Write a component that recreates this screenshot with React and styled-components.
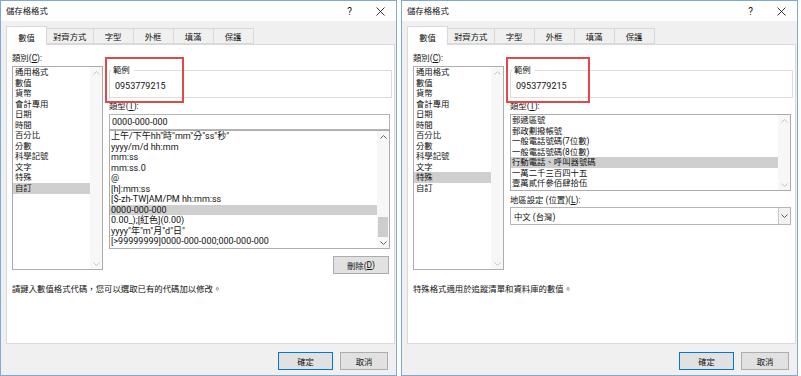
import React from "react";
import styled, { createGlobalStyle } from "styled-components";

const GlobalStyle = createGlobalStyle`
  html, body {
    margin: 0;
    padding: 0;
    background: #fff;
  }
  body {
    font-family: Roboto, "Noto Sans CJK TC", sans-serif;
    font-size: 9px;
    color: #111;
  }
`;

const Page = styled.div`
  display: flex;
  gap: 4px;
  width: 801px;
  height: 376px;
  overflow: hidden;
`;

const Window = styled.div`
  position: relative;
  box-sizing: border-box;
  width: 397px;
  height: 376px;
  border: 1px solid #7fa9d8;
  background: #f0f0f0;
  display: flex;
  flex-direction: column;
`;

const TitleBar = styled.div`
  height: 20px;
  flex-shrink: 0;
  background: #fff;
  display: flex;
  align-items: center;
  padding-left: 5px;
`;

const Title = styled.div`
  flex: 1;
  font-size: 8.4px;
  line-height: 11px;
`;

const TitleButton = styled.div`
  width: 31px;
  height: 20px;
  display: flex;
  align-items: center;
  justify-content: center;
  font-size: 10px;
`;

const TabRow = styled.div`
  height: 23px;
  flex-shrink: 0;
  display: flex;
  align-items: flex-end;
  padding-left: 5px;
`;

const Tab = styled.div`
  position: relative;
  box-sizing: border-box;
  min-width: 41px;
  height: ${(p) => (p.$active ? "19px" : "16px")};
  margin-right: -1px;
  margin-bottom: ${(p) => (p.$active ? "-1px" : "0")};
  padding: ${(p) => (p.$active ? "1px 6px 0" : "0 6px")};
  z-index: ${(p) => (p.$active ? 1 : 0)};
  border: 1px solid #d9d9d9;
  border-bottom: ${(p) => (p.$active ? "none" : "1px solid #d9d9d9")};
  background: ${(p) => (p.$active ? "#fff" : "#f0f0f0")};
  display: flex;
  align-items: center;
  justify-content: center;
  font-size: 8.4px;
  white-space: nowrap;
`;

const Panel = styled.div`
  box-sizing: border-box;
  height: 300px;
  flex-shrink: 0;
  margin: 0 1px 0 5px;
  padding: 8px 2px 0 5px;
  background: #fff;
  border: 1px solid #d9d9d9;
  display: flex;
  flex-direction: column;
`;

const Columns = styled.div`
  height: 221px;
  display: grid;
  grid-template-columns: 91px 283px;
  column-gap: 6px;
  align-items: start;
`;

const Column = styled.div`
  display: flex;
  flex-direction: column;
`;

const Label = styled.div`
  font-size: 8.4px;
  line-height: 11px;
  margin-top: ${(p) => p.$top || 0}px;
  white-space: nowrap;
  u {
    text-decoration-thickness: 0.5px;
    text-underline-offset: 1px;
  }
`;

const SampleGroup = styled.fieldset`
  margin: 12px 0 0;
  padding: 5px 5px 5px;
  border: 1px solid #dcdcdc;
  min-width: 0;
`;

const SampleLegend = styled.legend`
  margin-left: -4px;
  padding: 0 4px 0 2px;
  font-size: 8.4px;
  line-height: 11px;
`;

const SampleValue = styled.div`
  line-height: 11px;
`;

const Annotation = styled.div`
  position: absolute;
  left: 104px;
  top: 56px;
  width: ${(p) => p.$width}px;
  height: 46px;
  box-sizing: border-box;
  border: 2.5px solid #e0484d;
  pointer-events: none;
`;

const TextInput = styled.div`
  box-sizing: border-box;
  width: 281px;
  height: 16px;
  margin-top: 2px;
  padding-left: 2px;
  border: 1px solid #b5b5b5;
  background: #fff;
  line-height: 14px;
`;

const ListBox = styled.div`
  box-sizing: border-box;
  width: ${(p) => p.$width}px;
  height: ${(p) => p.$height}px;
  margin-top: ${(p) => p.$top || 0}px;
  border: 1px solid #acacac;
  background: #fff;
  display: flex;
`;

const ListItems = styled.div`
  flex: 1;
  min-width: 0;
  overflow: hidden;
`;

const ListRow = styled.div`
  height: 10.55px;
  line-height: 10.55px;
  padding-left: ${(p) => p.$indent}px;
  font-size: ${(p) => (p.$zh ? "8.4px" : "9px")};
  background: ${(p) => (p.$selected ? "#cfcfcf" : "transparent")};
  white-space: nowrap;
`;

const ScrollBar = styled.div`
  width: 12px;
  flex-shrink: 0;
  display: flex;
  flex-direction: column;
  background: #f7f7f7;
`;

const ScrollArrow = styled.div`
  height: 11px;
  flex-shrink: 0;
  display: flex;
  align-items: center;
  justify-content: center;
`;

const ScrollRail = styled.div`
  flex: 1;
  display: flex;
  flex-direction: column;
  justify-content: flex-end;
  padding: 0 1px 0 1px;
`;

const ScrollThumb = styled.div`
  height: 20px;
  background: #cdcdcd;
`;

const Button = styled.div`
  box-sizing: border-box;
  width: ${(p) => p.$width}px;
  height: 18px;
  border: 1px solid ${(p) => (p.$default ? "#0078d7" : "#adadad")};
  background: #e1e1e1;
  display: flex;
  align-items: center;
  justify-content: center;
  font-size: 8.4px;
  u {
    text-decoration-thickness: 0.5px;
    text-underline-offset: 1px;
  }
`;

const DeleteRow = styled.div`
  display: flex;
  justify-content: flex-end;
  margin: 7px 3px 0 0;
`;

const Select = styled.div`
  box-sizing: border-box;
  width: 281px;
  height: 18px;
  margin-top: 1px;
  border: 1px solid #b5b5b5;
  background: #fff;
  display: flex;
  align-items: center;
`;

const SelectText = styled.div`
  flex: 1;
  padding-left: 3px;
  font-size: 8.4px;
`;

const SelectButton = styled.div`
  box-sizing: border-box;
  width: 12px;
  height: 16px;
  border-left: 1px solid #c8c8c8;
  background: #f2f2f2;
  display: flex;
  align-items: center;
  justify-content: center;
`;

const Description = styled.div`
  margin-top: 10px;
  font-size: 8.4px;
  line-height: 11px;
`;

const Footer = styled.div`
  display: flex;
  justify-content: flex-end;
  gap: 7px;
  padding: 8px 8px 0 0;
`;

const Chevron = ({ up, color }) => (
  <svg width="7" height="4" viewBox="0 0 7 4">
    <polyline
      points={up ? "0.5,3.5 3.5,0.5 6.5,3.5" : "0.5,0.5 3.5,3.5 6.5,0.5"}
      fill="none"
      stroke={color}
      strokeWidth="1"
    />
  </svg>
);

const CloseIcon = () => (
  <svg width="9" height="9" viewBox="0 0 9 9">
    <path d="M0.5 0.5 L8.5 8.5 M8.5 0.5 L0.5 8.5" stroke="#222" strokeWidth="0.9" />
  </svg>
);

const Scroller = ({ disabled, thumb }) => {
  const color = disabled ? "#c4c4c4" : "#606060";
  return (
    <ScrollBar>
      <ScrollArrow>
        <Chevron up color={color} />
      </ScrollArrow>
      <ScrollRail>{thumb && <ScrollThumb />}</ScrollRail>
      <ScrollArrow>
        <Chevron color={color} />
      </ScrollArrow>
    </ScrollBar>
  );
};

const List = ({ items, selected, width, height, top, indent, zh, disabled, thumb }) => (
  <ListBox $width={width} $height={height} $top={top}>
    <ListItems>
      {items.map((item) => (
        <ListRow key={item} $indent={indent} $zh={zh} $selected={item === selected}>
          {item}
        </ListRow>
      ))}
    </ListItems>
    <Scroller disabled={disabled} thumb={thumb} />
  </ListBox>
);

const tabs = ["數值", "對齊方式", "字型", "外框", "填滿", "保護"];

const categories = [
  "通用格式",
  "數值",
  "貨幣",
  "會計專用",
  "日期",
  "時間",
  "百分比",
  "分數",
  "科學記號",
  "文字",
  "特殊",
  "自訂",
];

const customFormats = [
  '上午/下午hh"時"mm"分"ss"秒"',
  "yyyy/m/d hh:mm",
  "mm:ss",
  "mm:ss.0",
  "@",
  "[h]:mm:ss",
  "[$-zh-TW]AM/PM hh:mm:ss",
  "0000-000-000",
  "0.00_);[紅色](0.00)",
  'yyyy"年"m"月"d"日"',
  "[>99999999]0000-000-000;000-000-000",
];

const specialFormats = [
  "郵遞區號",
  "郵政劃撥帳號",
  "一般電話號碼(7位數)",
  "一般電話號碼(8位數)",
  "行動電話、呼叫器號碼",
  "一萬二千三百四十五",
  "壹萬貳仟參佰肆拾伍",
];

const FormatDialog = ({ category, markWidth, description, children }) => (
  <Window>
    <TitleBar>
      <Title>儲存格格式</Title>
      <TitleButton>?</TitleButton>
      <TitleButton>
        <CloseIcon />
      </TitleButton>
    </TitleBar>
    <TabRow>
      {tabs.map((t, i) => (
        <Tab key={t} $active={i === 0}>
          {t}
        </Tab>
      ))}
    </TabRow>
    <Panel>
      <Columns>
        <Column>
          <Label>
            類別(<u>C</u>):
          </Label>
          <List
            items={categories}
            selected={category}
            width={91}
            height={204}
            top={2}
            indent={2}
            zh
            disabled
          />
        </Column>
        <Column>
          <SampleGroup>
            <SampleLegend>範例</SampleLegend>
            <SampleValue>0953779215</SampleValue>
          </SampleGroup>
          <Label $top={3}>
            類型(<u>T</u>):
          </Label>
          {children}
        </Column>
      </Columns>
      <Description>{description}</Description>
    </Panel>
    <Footer>
      <Button $width={55} $default>
        確定
      </Button>
      <Button $width={48}>取消</Button>
    </Footer>
    <Annotation $width={markWidth} />
  </Window>
);

export default function App() {
  return (
    <>
      <GlobalStyle />
      <Page>
        <FormatDialog
          category="自訂"
          markWidth={79}
          description="請鍵入數值格式代碼，您可以選取已有的代碼加以修改。"
        >
          <TextInput>0000-000-000</TextInput>
          <List
            items={customFormats}
            selected="0000-000-000"
            width={281}
            height={119}
            indent={1}
            thumb
          />
          <DeleteRow>
            <Button $width={56}>
              刪除(<u>D</u>)
            </Button>
          </DeleteRow>
        </FormatDialog>
        <FormatDialog
          category="特殊"
          markWidth={84}
          description="特殊格式適用於追蹤清單和資料庫的數值。"
        >
          <List
            items={specialFormats}
            selected="行動電話、呼叫器號碼"
            width={281}
            height={77}
            top={2}
            indent={1}
            zh
            disabled
          />
          <Label $top={4}>
            地區設定 (位置)(<u>L</u>):
          </Label>
          <Select>
            <SelectText>中文 (台灣)</SelectText>
            <SelectButton>
              <Chevron color="#555" />
            </SelectButton>
          </Select>
        </FormatDialog>
      </Page>
    </>
  );
}
